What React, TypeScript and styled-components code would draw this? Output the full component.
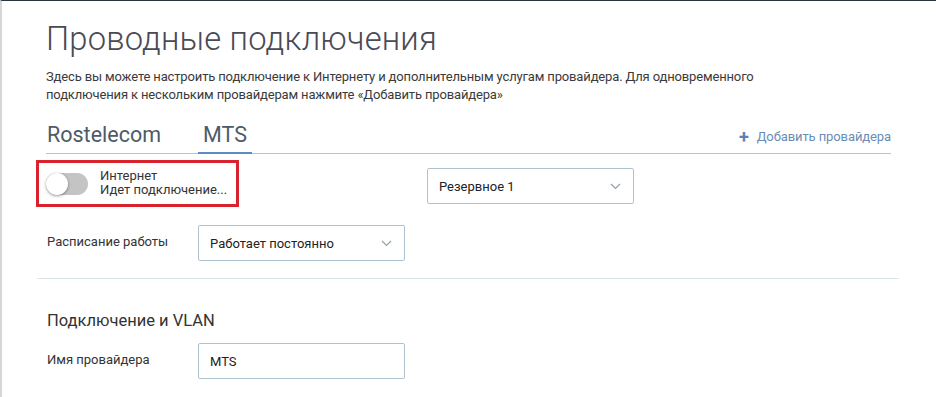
import React from "react";
import styled, { createGlobalStyle } from "styled-components";

const Global = createGlobalStyle`
  html, body { margin: 0; padding: 0; background: #fff; }
  body { font-family: Roboto, "Noto Sans", "Liberation Sans", sans-serif; color: #333; }
  * { box-sizing: border-box; }
`;

const Page = styled.div`
  position: relative;
  width: 936px;
  height: 397px;
  overflow: hidden;
  border-top: 1px solid #2b3540;
  border-left: 2px solid #d6d6d6;
  &::before {
    content: "";
    position: absolute;
    left: -2px;
    top: 0;
    width: 2px;
    height: 34px;
    background: #2b3540;
  }
`;

const Content = styled.div`
  padding: 18px 0 0 44px;
  width: 890px;
`;

const Title = styled.h1`
  margin: 0;
  font-size: 32.7px;
  line-height: 40px;
  font-weight: 300;
  color: #4a4a55;
  letter-spacing: 0.2px;
`;

const Description = styled.p`
  margin: 9px 0 0 0;
  font-size: 13px;
  line-height: 18px;
  color: #3a3a3a;
  letter-spacing: -0.15px;
  width: 790px;
`;

const TabBar = styled.div`
  display: flex;
  align-items: flex-end;
  margin-top: 18px;
  width: 845px;
  border-bottom: 1px solid #b4c6d6;
  height: 32px;
`;

const Tab = styled.div<{ $active?: boolean }>`
  font-size: 21.5px;
  line-height: 26px;
  padding: 0 1px 5px 1px;
  margin-right: ${(p) => (p.$active ? "0" : "36px")};
  color: #4d5b69;
  position: relative;
  ${(p) =>
    p.$active &&
    `
    padding: 0 5px 5px 5px;
    &::after {
      content: "";
      position: absolute;
      left: 0;
      right: 0;
      bottom: -1px;
      height: 2px;
      background: #5b8cc6;
    }
  `}
`;

const AddProvider = styled.div`
  margin-left: auto;
  display: flex;
  align-items: center;
  gap: 8px;
  font-size: 13px;
  letter-spacing: -0.1px;
  color: #6a8db8;
  padding-bottom: 9px;
`;

const Plus = styled.span`
  font-size: 18px;
  font-weight: 700;
  line-height: 14px;
  color: #5b82b3;
`;

const StatusRow = styled.div`
  display: flex;
  align-items: center;
  margin-top: 6px;
  margin-left: -10px;
`;

const Highlight = styled.div`
  display: flex;
  align-items: center;
  gap: 12px;
  width: 203px;
  height: 47px;
  border: 3px solid #d8222c;
  padding-left: 7px;
`;

const Toggle = styled.div`
  position: relative;
  width: 42px;
  height: 22px;
  border-radius: 11px;
  background: #c4c4c4;
`;

const Knob = styled.div`
  position: absolute;
  left: 0;
  top: 0;
  width: 22px;
  height: 22px;
  border-radius: 50%;
  background: #fff;
  box-shadow: 0 1px 3px rgba(0, 0, 0, 0.4);
`;

const StatusText = styled.div`
  display: flex;
  flex-direction: column;
  font-size: 13px;
  line-height: 14px;
  color: #333;
  margin-top: -2px;
`;

const Select = styled.div<{ $ml?: number; $mt?: number }>`
  display: flex;
  align-items: center;
  justify-content: space-between;
  width: 207px;
  height: 36px;
  border: 1px solid #aec2ce;
  border-radius: 2px;
  padding: 0 12px 0 11px;
  font-size: 13px;
  color: #222;
  margin-left: ${(p) => p.$ml ?? 0}px;
  margin-top: ${(p) => p.$mt ?? 0}px;
`;

const Chevron = () => (
  <svg width="11" height="7" viewBox="0 0 11 7">
    <path d="M1 1 L5.5 5.5 L10 1" fill="none" stroke="#8fa2ae" strokeWidth="1.2" />
  </svg>
);

const FieldRow = styled.div<{ $mt: number }>`
  display: flex;
  align-items: center;
  margin-top: ${(p) => p.$mt}px;
`;

const Label = styled.div`
  width: 152px;
  padding-left: 1px;
  font-size: 13px;
  color: #333;
  margin-top: -3px;
`;

const Divider = styled.div`
  margin: 17px 0 0 -9px;
  width: 862px;
  height: 1px;
  background: #dbe5ea;
`;

const SectionTitle = styled.h2`
  margin: 32px 0 0 1px;
  font-size: 16.5px;
  line-height: 20px;
  font-weight: 400;
  color: #333;
`;

export default function App() {
  return (
    <>
      <Global />
      <Page>
        <Content>
          <Title>Проводные подключения</Title>
          <Description>
            Здесь вы можете настроить подключение к Интернету и дополнительным услугам провайдера. Для одновременного
            подключения к нескольким провайдерам нажмите «Добавить провайдера»
          </Description>
          <TabBar>
            <Tab>Rostelecom</Tab>
            <Tab $active>MTS</Tab>
            <AddProvider>
              <Plus>+</Plus>
              <span>Добавить провайдера</span>
            </AddProvider>
          </TabBar>
          <StatusRow>
            <Highlight>
              <Toggle>
                <Knob />
              </Toggle>
              <StatusText>
                <span>Интернет</span>
                <span>Идет подключение...</span>
              </StatusText>
            </Highlight>
            <Select $ml={188} $mt={5}>
              <span>Резервное 1</span>
              <Chevron />
            </Select>
          </StatusRow>
          <FieldRow $mt={18}>
            <Label>Расписание работы</Label>
            <Select>
              <span>Работает постоянно</span>
              <Chevron />
            </Select>
          </FieldRow>
          <Divider />
          <SectionTitle>Подключение и VLAN</SectionTitle>
          <FieldRow $mt={12}>
            <Label>Имя провайдера</Label>
            <Select>
              <span>MTS</span>
            </Select>
          </FieldRow>
        </Content>
      </Page>
    </>
  );
}
